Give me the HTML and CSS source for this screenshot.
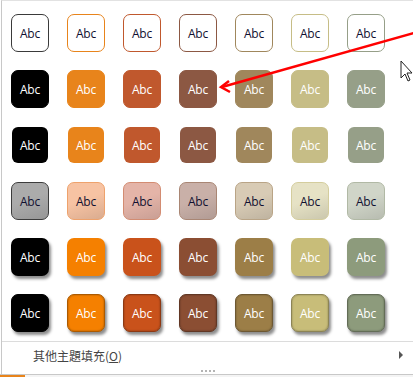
FILE: index.html
```
<!DOCTYPE html>
<html>

<head>
    <title>Shape styles</title>
    <link rel="stylesheet" href="styles.css">
</head>

<body>
    <div class="panel">
        <div class="gallery">
            <div class="cell c1"><div class="tile outline">Abc</div></div>
            <div class="cell c2"><div class="tile outline">Abc</div></div>
            <div class="cell c3"><div class="tile outline">Abc</div></div>
            <div class="cell c4"><div class="tile outline">Abc</div></div>
            <div class="cell c5"><div class="tile outline">Abc</div></div>
            <div class="cell c6"><div class="tile outline">Abc</div></div>
            <div class="cell c7"><div class="tile outline">Abc</div></div>

            <div class="cell c1"><div class="tile solid">Abc</div></div>
            <div class="cell c2"><div class="tile solid">Abc</div></div>
            <div class="cell c3"><div class="tile solid">Abc</div></div>
            <div class="cell c4"><div class="tile solid">Abc</div></div>
            <div class="cell c5"><div class="tile solid">Abc</div></div>
            <div class="cell c6"><div class="tile solid">Abc</div></div>
            <div class="cell c7"><div class="tile solid">Abc</div></div>

            <div class="cell c1"><div class="tile flat">Abc</div></div>
            <div class="cell c2"><div class="tile flat">Abc</div></div>
            <div class="cell c3"><div class="tile flat">Abc</div></div>
            <div class="cell c4"><div class="tile flat">Abc</div></div>
            <div class="cell c5"><div class="tile flat">Abc</div></div>
            <div class="cell c6"><div class="tile flat">Abc</div></div>
            <div class="cell c7"><div class="tile flat">Abc</div></div>

            <div class="cell c1"><div class="tile light">Abc</div></div>
            <div class="cell c2"><div class="tile light">Abc</div></div>
            <div class="cell c3"><div class="tile light">Abc</div></div>
            <div class="cell c4"><div class="tile light">Abc</div></div>
            <div class="cell c5"><div class="tile light">Abc</div></div>
            <div class="cell c6"><div class="tile light">Abc</div></div>
            <div class="cell c7"><div class="tile light">Abc</div></div>

            <div class="cell c1"><div class="tile raised">Abc</div></div>
            <div class="cell c2"><div class="tile raised">Abc</div></div>
            <div class="cell c3"><div class="tile raised">Abc</div></div>
            <div class="cell c4"><div class="tile raised">Abc</div></div>
            <div class="cell c5"><div class="tile raised">Abc</div></div>
            <div class="cell c6"><div class="tile raised">Abc</div></div>
            <div class="cell c7"><div class="tile raised">Abc</div></div>

            <div class="cell c1"><div class="tile raised rough">Abc</div></div>
            <div class="cell c2"><div class="tile raised rough">Abc</div></div>
            <div class="cell c3"><div class="tile raised rough">Abc</div></div>
            <div class="cell c4"><div class="tile raised rough">Abc</div></div>
            <div class="cell c5"><div class="tile raised rough">Abc</div></div>
            <div class="cell c6"><div class="tile raised rough">Abc</div></div>
            <div class="cell c7"><div class="tile raised rough">Abc</div></div>
        </div>

        <div class="menu-item">
            <span>其他主題填充(<u>O</u>)</span>
            <span class="submenu"></span>
        </div>
        <div class="grip"><span class="grip-dots"></span></div>
    </div>
    <div class="ribbon-edge"></div>

    <!-- annotation arrow drawn over the gallery -->
    <svg class="annotation" width="413" height="377" viewBox="0 0 413 377">
        <line x1="414" y1="33" x2="222" y2="87" stroke="#f00" stroke-width="2.5" />
        <polyline points="229,81 221,87 230,92" fill="none" stroke="#f00" stroke-width="2.5" />
        <path d="M401 61 L401 78 L405 74 L408 81 L410 80 L407 73 L412 73 Z" fill="#fff" stroke="#222" stroke-width="1" />
    </svg>
</body>

</html>
```

FILE: styles.css
```
body {
    margin: 0;
    background: #fff;
    font-family: "Open Sans", "Noto Sans", sans-serif;
}

.panel {
    position: relative;
    margin-left: 1px;
    border-left: 1px solid #c8c8c8;
    border-top: 1px solid #e2e2e2;
    height: 373px;
}

.gallery {
    display: grid;
    grid-template-columns: repeat(7, 56px);
    grid-auto-rows: 56px;
    padding-top: 4px;
}

.c1 { --c: #000000; --l: #ababab; --lb: #3c3c3c; --d: #000000; }
.c2 { --c: #e8841b; --l: #f7c3a3; --lb: #eea26c; --d: #f58000; }
.c3 { --c: #c0582d; --l: #e4b4a8; --lb: #d38c72; --d: #c9521b; }
.c4 { --c: #8c5843; --l: #c9b0a8; --lb: #a98674; --d: #8b4e33; }
.c5 { --c: #a0875c; --l: #d8cbb5; --lb: #b9a486; --d: #9c7e47; }
.c6 { --c: #c6bd86; --l: #e6e2c5; --lb: #d4cd9d; --d: #c8bd79; }
.c7 { --c: #969f88; --l: #d0d5c8; --lb: #b1b9a5; --d: #8d9b7c; }

.cell {
    display: flex;
    justify-content: center;
    align-items: center;
}

.tile {
    box-sizing: border-box;
    width: 38px;
    height: 38px;
    border-radius: 7px;
    display: flex;
    justify-content: center;
    align-items: center;
    font-size: 12px;
    letter-spacing: -0.2px;
    color: #fff;
}

.tile.outline {
    background: #fff;
    border: 1px solid var(--c);
    color: #101030;
}

.c1 .tile.outline {
    border-color: #3a3a3a;
}

.tile.solid {
    background: var(--c);
    border: 1px solid var(--c);
}

.tile.flat {
    width: 36px;
    height: 36px;
    border-radius: 6px;
    background: var(--c);
}

.tile.light {
    background: linear-gradient(160deg, var(--l), var(--l) 45%, color-mix(in srgb, var(--l) 88%, #000));
    border: 1px solid var(--lb);
    color: #101030;
}

.tile.raised {
    background: var(--d);
    box-shadow: 2px 3px 3px rgba(0, 0, 0, 0.45);
}

.tile.rough {
    border: 1px solid color-mix(in srgb, var(--d) 70%, #000);
    box-shadow: 2px 3px 3px rgba(0, 0, 0, 0.45), inset 0 0 2px rgba(0, 0, 0, 0.35);
}

.menu-item {
    display: flex;
    justify-content: space-between;
    align-items: center;
    border-top: 1px solid #dcdcdc;
    height: 26px;
    padding: 0 10px 0 31px;
    font-family: "Noto Sans CJK TC", "Noto Sans", sans-serif;
    font-size: 12px;
    color: #444;
}

.submenu {
    width: 0;
    height: 0;
    border-top: 4px solid transparent;
    border-bottom: 4px solid transparent;
    border-left: 4px solid #555;
}

.grip {
    display: flex;
    justify-content: center;
    padding: 2px 0 0 2px;
}

.grip-dots {
    width: 15px;
    height: 2px;
    background: repeating-linear-gradient(to right, #b4b4b4 0 2px, transparent 2px 4px);
}

.ribbon-edge {
    height: 3px;
    border-top: 1px solid #c8c8c8;
    background: linear-gradient(to right, #e8841b 25px, #f4f4f4 25px);
}

.annotation {
    position: absolute;
    left: 0;
    top: 0;
}
```
